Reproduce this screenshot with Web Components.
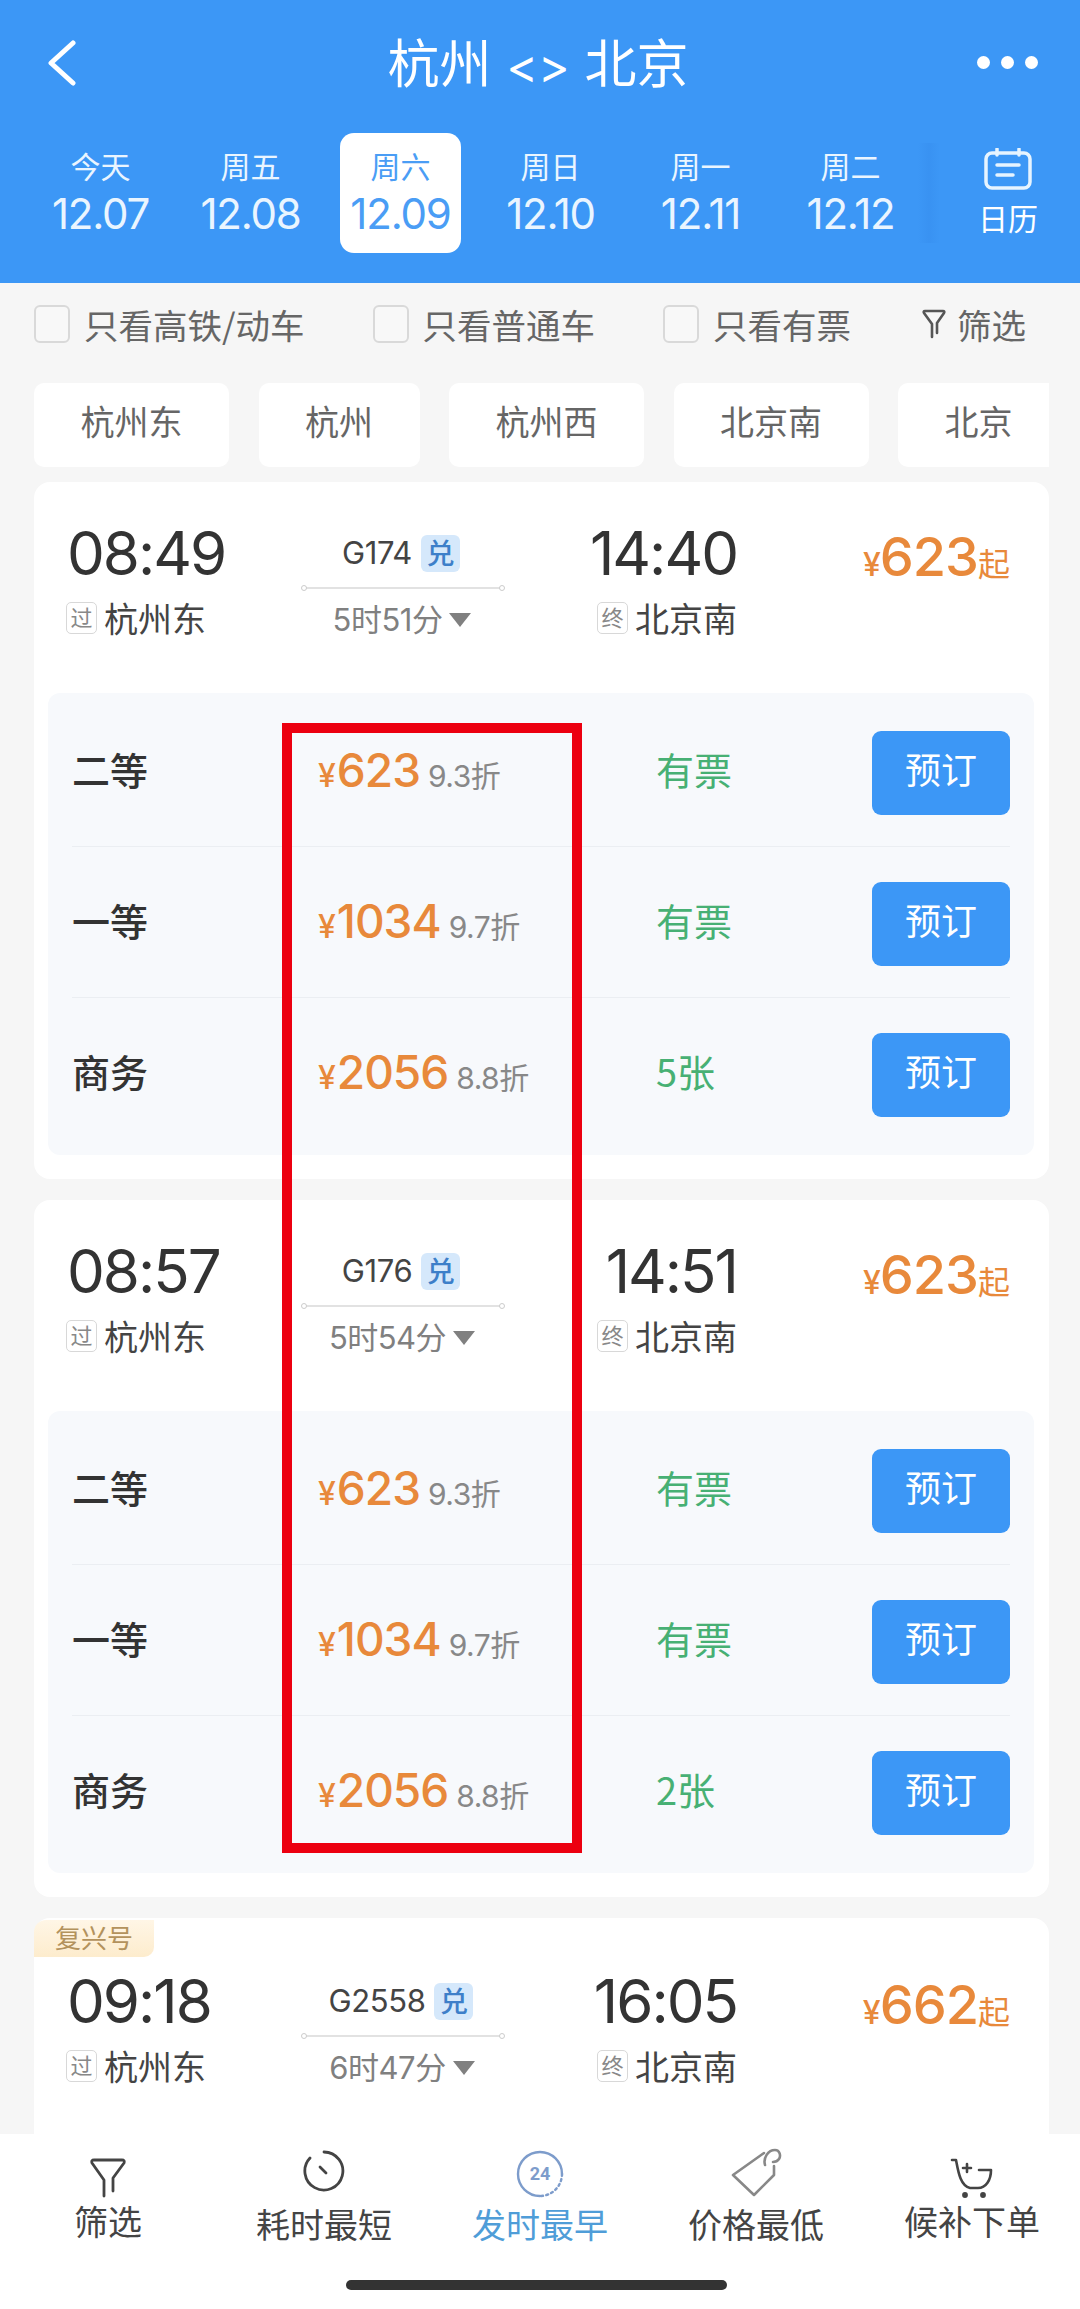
<!DOCTYPE html>
<html lang="zh">
<head>
<meta charset="utf-8">
<title>杭州 - 北京</title>
<style>
  html, body { margin: 0; padding: 0; }
  body {
    width: 1080px;
    height: 2309px;
    overflow: hidden;
    position: relative;
    background: #f6f6f6;
    display: flex;
    flex-direction: column;
    font-family: "Noto Sans CJK SC", "Noto Sans", sans-serif;
  }
</style>
</head>
<body>

<app-header>
  <date-tab week="今天" date="12.07"></date-tab>
  <date-tab week="周五" date="12.08"></date-tab>
  <date-tab week="周六" date="12.09" selected></date-tab>
  <date-tab week="周日" date="12.10"></date-tab>
  <date-tab week="周一" date="12.11"></date-tab>
  <date-tab week="周二" date="12.12"></date-tab>
</app-header>

<filter-row></filter-row>

<station-bar>
  <station-chip>杭州东</station-chip>
  <station-chip>杭州</station-chip>
  <station-chip>杭州西</station-chip>
  <station-chip>北京南</station-chip>
  <station-chip>北京</station-chip>
</station-bar>

<train-list>
  <train-card dep="08:49" arr="14:40" no="G174" dur="5时51分" price="623">
    <seat-row name="二等" price="623" off="9.3折" left="有票"></seat-row>
    <seat-row name="一等" price="1034" off="9.7折" left="有票"></seat-row>
    <seat-row name="商务" price="2056" off="8.8折" left="5张"></seat-row>
  </train-card>
  <train-card dep="08:57" arr="14:51" no="G176" dur="5时54分" price="623">
    <seat-row name="二等" price="623" off="9.3折" left="有票"></seat-row>
    <seat-row name="一等" price="1034" off="9.7折" left="有票"></seat-row>
    <seat-row name="商务" price="2056" off="8.8折" left="2张"></seat-row>
  </train-card>
  <train-card dep="09:18" arr="16:05" no="G2558" dur="6时47分" price="662" tag="复兴号"></train-card>
</train-list>

<sort-bar></sort-bar>

<highlight-box></highlight-box>

<script>
// Inter has the narrow proportional "1" the digits in the app use
const numFont = 'Inter, "Noto Sans CJK SC", sans-serif';
const cjkFont = '"Noto Sans CJK SC", "Noto Sans", sans-serif';

class AppHeader extends HTMLElement {
  constructor() {
    super();
    this.attachShadow({mode: 'open'});
    this.shadowRoot.innerHTML = `
      <style>
        :host {
          display: block;
          height: 283px;
          background: #3c97f6;
          color: #fff;
          font-family: ${cjkFont};
        }
        .nav {
          height: 125px;
          display: flex;
          align-items: center;
          justify-content: space-between;
          padding: 0 42px 0 46px;
        }
        .title { font-size: 52px; font-weight: 400; line-height: 125px; margin-left: 19px; white-space: nowrap; }
        .title b { font-weight: 400; font-family: ${numFont}; font-size: 48px; margin: 0 3px; }
        .back { width: 34px; height: 46px; }
        .dots { display: flex; gap: 11px; }
        .dots i { width: 13px; height: 13px; border-radius: 50%; background: #fff; }
        .dates {
          display: flex;
          margin-top: 8px;
          padding-left: 40px;
          gap: 29px;
        }
        .shade {
          width: 22px;
          height: 100px;
          margin: 10px 0 0 -22px;
          background: linear-gradient(90deg, rgba(40,120,220,0), rgba(40,120,220,.16), rgba(40,120,220,0));
        }
        .cal {
          width: 64px;
          margin-left: 7px;
          display: flex;
          flex-direction: column;
          align-items: center;
          padding-top: 15px;
        }
        .cal svg { display: block; }
        .cal span { font-size: 30px; line-height: 44px; margin-top: 5px; white-space: nowrap; }
      </style>
      <div class="nav">
        <svg class="back" viewBox="0 0 34 46" fill="none" stroke="#fff" stroke-width="5" stroke-linecap="round" stroke-linejoin="round"><path d="M27 3 L5 23 L27 43"/></svg>
        <div class="title">杭州 <b>&lt;&gt;</b> 北京</div>
        <div class="dots"><i></i><i></i><i></i></div>
      </div>
      <div class="dates">
        <slot></slot>
        <div class="shade"></div>
        <div class="cal">
          <svg width="48" height="42" viewBox="0 0 48 42" fill="none" stroke="#e6f4ff" stroke-width="3.5" stroke-linecap="round">
            <rect x="2" y="5" width="44" height="35" rx="6"/>
            <path d="M13 1 V7 M35 1 V7 M13 17 H35 M13 27 H29"/>
          </svg>
          <span>日历</span>
        </div>
      </div>
    `;
  }
}
customElements.define('app-header', AppHeader);

class DateTab extends HTMLElement {
  constructor() {
    super();
    this.attachShadow({mode: 'open'});
    this.shadowRoot.innerHTML = `
      <style>
        :host {
          display: block;
          width: 121px;
          height: 120px;
          box-sizing: border-box;
          padding-top: 11px;
          text-align: center;
          border-radius: 14px;
          color: #eaf5ff;
        }
        :host([selected]) { background: #fff; color: #4a9df5; }
        .week { font: 400 30px/42px ${cjkFont}; }
        .date { font: 400 42px/56px ${numFont}; letter-spacing: -1.2px; white-space: nowrap; }
      </style>
      <div class="week"></div>
      <div class="date"></div>
    `;
  }
  connectedCallback() {
    this.shadowRoot.querySelector('.week').textContent = this.getAttribute('week');
    this.shadowRoot.querySelector('.date').textContent = this.getAttribute('date');
  }
}
customElements.define('date-tab', DateTab);

class FilterRow extends HTMLElement {
  constructor() {
    super();
    this.attachShadow({mode: 'open'});
    this.shadowRoot.innerHTML = `
      <style>
        :host {
          display: flex;
          align-items: center;
          height: 82px;
          padding: 0 0 0 34px;
          gap: 68px;
          font: 400 34.5px/78px ${cjkFont};
          color: #666;
        }
        .opt { display: flex; align-items: center; gap: 14px; white-space: nowrap; }
        .box {
          width: 36px;
          height: 38px;
          box-sizing: border-box;
          border: 2px solid #d9d9d9;
          border-radius: 6px;
          background: #f8f8f8;
        }
        .more { display: flex; align-items: center; gap: 11px; margin-left: 3px; }
      </style>
      <div class="opt"><span class="box"></span>只看高铁/动车</div>
      <div class="opt"><span class="box"></span>只看普通车</div>
      <div class="opt"><span class="box"></span>只看有票</div>
      <div class="more">
        <svg width="24" height="30" viewBox="0 0 24 30" fill="none" stroke="#555" stroke-width="2.6" stroke-linejoin="round" stroke-linecap="round"><path d="M10 28 V15 L2 4 Q1 2 3 2 H21 Q23 2 22 4 L15 14 V24"/></svg>
        筛选
      </div>
    `;
  }
}
customElements.define('filter-row', FilterRow);

class StationBar extends HTMLElement {
  constructor() {
    super();
    this.attachShadow({mode: 'open'});
    this.shadowRoot.innerHTML = `
      <style>
        :host {
          display: flex;
          gap: 29.5px;
          margin: 18px 31px 0 34px;
          height: 84px;
          overflow: hidden;
        }
      </style>
      <slot></slot>
    `;
  }
}
customElements.define('station-bar', StationBar);

class StationChip extends HTMLElement {
  constructor() {
    super();
    this.attachShadow({mode: 'open'});
    this.shadowRoot.innerHTML = `
      <style>
        :host {
          flex: none;
          display: block;
          padding: 0 46.5px;
          background: #fff;
          border-radius: 10px;
          color: #666;
          font: 400 34px/76px ${cjkFont};
          height: 84px;
          white-space: nowrap;
        }
      </style>
      <slot></slot>
    `;
  }
}
customElements.define('station-chip', StationChip);

class TrainList extends HTMLElement {
  constructor() {
    super();
    this.attachShadow({mode: 'open'});
    this.shadowRoot.innerHTML = `
      <style>
        :host {
          display: flex;
          flex-direction: column;
          flex: 1;
          min-height: 0;
          overflow: hidden;
          gap: 21px;
          padding: 15px 31px 0 34px;
        }
      </style>
      <slot></slot>
    `;
  }
}
customElements.define('train-list', TrainList);

class TrainCard extends HTMLElement {
  constructor() {
    super();
    this.attachShadow({mode: 'open'});
    this.shadowRoot.innerHTML = `
      <style>
        :host {
          display: block;
          flex: none;
          position: relative;
          background: #fff;
          border-radius: 16px;
          padding-bottom: 24px;
          color: #333;
          font-family: ${cjkFont};
        }
        :host([tag]) { height: 300px; }
        :host([tag]) .head { padding-top: 47px; }
        .tag {
          display: none;
          position: absolute;
          left: 0;
          top: 2px;
          width: 120px;
          height: 37px;
          border-radius: 12px 0 10px 0;
          background: linear-gradient(180deg, #fff6e6, #fdeccd);
          color: #b3925c;
          font-size: 26px;
          line-height: 33px;
          text-align: center;
        }
        :host([tag]) .tag { display: block; }
        .head {
          display: grid;
          grid-template-columns: 233px 202px 234px 1fr;
          grid-template-rows: 72px 62px;
          padding: 35px 39px 42px 34px;
        }
        .time { font: 400 60px/72px ${numFont}; color: #333; letter-spacing: -2px; white-space: nowrap; margin-left: -1px; }
        .arr-time { text-align: right; }
        .train {
          position: relative;
          display: flex;
          align-items: center;
          justify-content: center;
          gap: 9px;
          border-bottom: 2px solid #e2e2e2;
          box-sizing: border-box;
          font: 400 31px/72px ${numFont};
          letter-spacing: -.4px;
          color: #444;
          margin-left: 2px;
          padding: 2px 4px 0 0;
        }
        .train::before, .train::after {
          content: "";
          position: absolute;
          bottom: -4px;
          width: 6px;
          height: 6px;
          box-sizing: border-box;
          border: 1px solid #ccc;
          border-radius: 50%;
          background: #fff;
        }
        .train::before { left: -2px; }
        .train::after { right: -2px; }
        .dui {
          width: 39px;
          height: 37px;
          border-radius: 6px;
          background: #d5e8fb;
          color: #3d7fc9;
          font: 500 28px/35px ${cjkFont};
          letter-spacing: 0;
          text-align: center;
        }
        .total {
          text-align: right;
          color: #e8893b;
          font: 500 54px/72px ${numFont};
          letter-spacing: -1px;
          white-space: nowrap;
          padding-top: 4px;
        }
        .total small { font-size: 32px; font-weight: 500; }
        .total .from { font-family: ${cjkFont}; font-size: 32px; font-weight: 400; letter-spacing: 0; }
        .stn {
          display: flex;
          align-items: center;
          font-size: 34px;
          line-height: 50px;
          height: 62px;
          box-sizing: border-box;
          padding-bottom: 4px;
          color: #444;
          white-space: nowrap;
        }
        .arr-stn { justify-content: flex-end; }
        .mark {
          width: 31px;
          height: 32px;
          margin-right: 7px;
          box-sizing: border-box;
          border: 1.5px solid #d8d8d8;
          border-radius: 5px;
          font-size: 22px;
          line-height: 26px;
          text-align: center;
          color: #888;
        }
        .dep-stn .mark { margin-left: -2px; }
        .dur {
          display: flex;
          align-items: center;
          justify-content: center;
          gap: 7px;
          font: 400 31px/62px ${numFont}, ${cjkFont};
          letter-spacing: -.5px;
          color: #808080;
        }
        .dur i {
          width: 0;
          height: 0;
          border-left: 11px solid transparent;
          border-right: 11px solid transparent;
          border-top: 14px solid #808080;
        }
        .panel {
          margin: 0 15px 0 14px;
          padding: 3px 0 6px;
          border-radius: 12px;
          background: #f7f9fc;
        }
        :host([tag]) .panel { display: none; }
      </style>
      <div class="tag"></div>
      <div class="head">
        <div class="time dep-time"></div>
        <div class="train"><span class="no"></span><span class="dui">兑</span></div>
        <div class="time arr-time"></div>
        <div class="total"><small>¥</small><span class="price"></span><span class="from">起</span></div>
        <div class="stn dep-stn"><span class="mark">过</span>杭州东</div>
        <div class="dur"><span class="len"></span><i></i></div>
        <div class="stn arr-stn"><span class="mark">终</span>北京南</div>
      </div>
      <div class="panel"><slot></slot></div>
    `;
  }
  connectedCallback() {
    const root = this.shadowRoot;
    root.querySelector('.dep-time').textContent = this.getAttribute('dep');
    root.querySelector('.arr-time').textContent = this.getAttribute('arr');
    root.querySelector('.no').textContent = this.getAttribute('no');
    root.querySelector('.len').textContent = this.getAttribute('dur');
    root.querySelector('.price').textContent = this.getAttribute('price');
    if (this.hasAttribute('tag')) {
      root.querySelector('.tag').textContent = this.getAttribute('tag');
    }
  }
}
customElements.define('train-card', TrainCard);

class SeatRow extends HTMLElement {
  constructor() {
    super();
    this.attachShadow({mode: 'open'});
    this.shadowRoot.innerHTML = `
      <style>
        :host {
          display: block;
          margin: 0 24px;
          height: 151px;
          font-family: ${cjkFont};
        }
        :host(:not(:last-child)) { border-bottom: 1px solid #ebeef2; height: 150px; }
        .row {
          display: grid;
          grid-template-columns: 246px 338px 216px 138px;
          align-items: center;
          height: 150px;
        }
        .name { font-size: 38px; font-weight: 500; color: #333; line-height: 48px; padding-bottom: 4px; }
        .cost { display: flex; align-items: baseline; color: #e8893b; font: 500 46px/60px ${numFont}; letter-spacing: -1px; white-space: nowrap; padding-top: 4px; }
        .cost small { font-size: 32px; margin-right: 2px; }
        .cost em { font: 400 30px/40px ${numFont}, ${cjkFont}; letter-spacing: -.5px; color: #888; margin-left: 8px; }
        .left { font-size: 38px; line-height: 48px; color: #47b074; padding-bottom: 4px; }
        .book {
          height: 84px;
          margin-top: 3px;
          border-radius: 9px;
          background: #3c97f6;
          color: #fff;
          font-size: 36px;
          line-height: 74px;
          text-align: center;
        }
      </style>
      <div class="row">
        <div class="name"></div>
        <div class="cost"><small>¥</small><span class="num"></span><em></em></div>
        <div class="left"></div>
        <div class="book">预订</div>
      </div>
    `;
  }
  connectedCallback() {
    const root = this.shadowRoot;
    root.querySelector('.name').textContent = this.getAttribute('name');
    root.querySelector('.num').textContent = this.getAttribute('price');
    root.querySelector('em').textContent = this.getAttribute('off');
    root.querySelector('.left').textContent = this.getAttribute('left');
  }
}
customElements.define('seat-row', SeatRow);

class SortBar extends HTMLElement {
  constructor() {
    super();
    this.attachShadow({mode: 'open'});
    this.shadowRoot.innerHTML = `
      <style>
        :host {
          display: block;
          flex: none;
          height: 175px;
          background: #fff;
          font-family: ${cjkFont};
          color: #444;
        }
        .items {
          display: grid;
          grid-template-columns: repeat(5, 216px);
          padding-top: 14px;
        }
        .item { display: flex; flex-direction: column; align-items: center; }
        .ico { height: 50px; display: flex; align-items: flex-end; }
        .item span { font-size: 34px; line-height: 46px; height: 48px; white-space: nowrap; }
        .low span { padding-top: 3px; }
        .on span { color: #4f9dd8; }
        .home {
          width: 381px;
          height: 10px;
          margin: 31px 0 0 346px;
          border-radius: 5px;
          background: #333;
        }
      </style>
      <div class="items">
        <div class="item">
          <div class="ico"><svg width="36" height="40" viewBox="0 0 36 40" fill="none" stroke="#444" stroke-width="2.8" stroke-linecap="round" stroke-linejoin="round"><path d="M14 38 V22 L2 5 Q1 2 4 2 H32 Q35 2 34 5 L23 20 V33"/></svg></div>
          <span>筛选</span>
        </div>
        <div class="item low">
          <div class="ico"><svg width="42" height="42" viewBox="0 0 42 42" fill="none" stroke="#444" stroke-width="2.8" stroke-linecap="round" style="margin-bottom:6px"><path d="M21 2 A19 19 0 1 1 7 8"/><path d="M17 17 L23 23"/></svg></div>
          <span>耗时最短</span>
        </div>
        <div class="item low on">
          <div class="ico"><svg width="48" height="48" viewBox="0 0 48 48" fill="none" stroke="#7d9ccb" stroke-width="2.4" stroke-linecap="round"><path d="M24 46 A22 22 0 1 1 46 24"/><path d="M46 24 A22 22 0 0 1 24 46" stroke-dasharray="2 3.2"/><text x="24" y="30" text-anchor="middle" font-family="Roboto, sans-serif" font-size="18" font-weight="700" fill="#7d9ccb" stroke="none">24</text></svg></div>
          <span>发时最早</span>
        </div>
        <div class="item low">
          <div class="ico"><svg width="52" height="50" viewBox="0 0 52 50" fill="none" stroke="#888" stroke-width="2.6" stroke-linecap="round" stroke-linejoin="round"><path d="M34 5 L3 27 L24 47 L44 27 V18"/><path d="M35 17 C33 10 38 2 45 2 C50 2 51 8 49 11 C47 14 45 14 43 14"/></svg></div>
          <span>价格最低</span>
        </div>
        <div class="item">
          <div class="ico"><svg width="44" height="40" viewBox="0 0 44 40" fill="none" stroke="#444" stroke-width="2.6" stroke-linecap="round" stroke-linejoin="round"><path d="M2 2 H6 C8 12 10 28 20 30 H28 C36 30 41 22 41 12 H29"/><path d="M17 6 V14 M13 10 H21"/><circle cx="15" cy="37" r="1.6" fill="#444"/><circle cx="33" cy="37" r="1.6" fill="#444"/></svg></div>
          <span>候补下单</span>
        </div>
      </div>
      <div class="home"></div>
    `;
  }
}
customElements.define('sort-bar', SortBar);

// red frame drawn over the screenshot, on top of both cards
class HighlightBox extends HTMLElement {
  constructor() {
    super();
    this.attachShadow({mode: 'open'});
    this.shadowRoot.innerHTML = `
      <style>
        :host {
          display: block;
          position: absolute;
          left: 282px;
          top: 723px;
          width: 300px;
          height: 1130px;
          box-sizing: border-box;
          border: 10px solid #ec0010;
        }
      </style>
    `;
  }
}
customElements.define('highlight-box', HighlightBox);
</script>
</body>
</html>
